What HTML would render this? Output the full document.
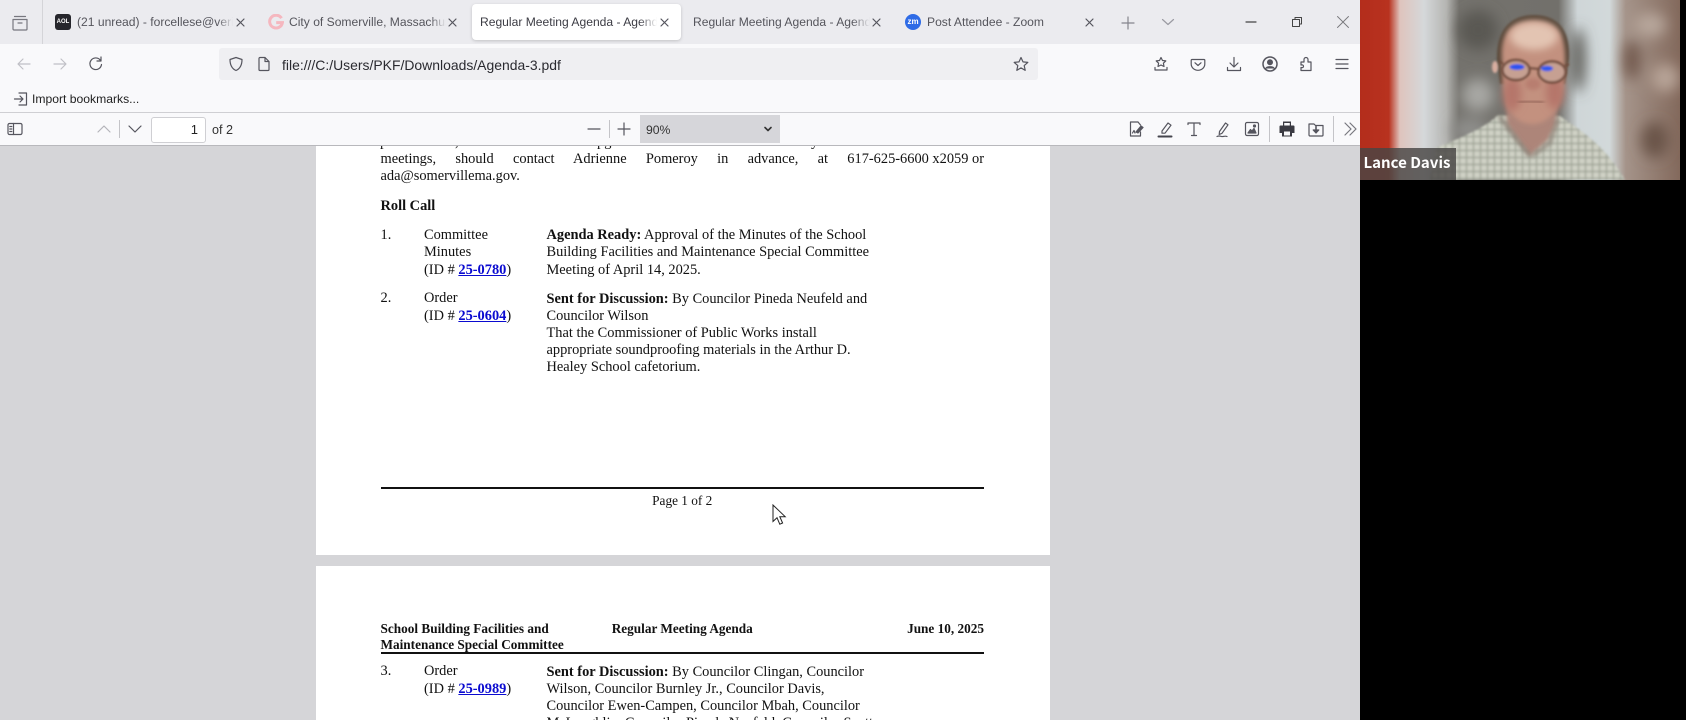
<!DOCTYPE html>
<html><head><meta charset="utf-8"><title>Agenda</title>
<style>
html,body{margin:0;padding:0;background:#000;overflow:hidden}
#r{position:relative;width:1686px;height:720px;overflow:hidden;background:#000;font-family:"Liberation Sans",sans-serif;filter:blur(.3px)}
.a{position:absolute}
.t{position:absolute;white-space:nowrap;line-height:20px;height:20px;color:#3c3c44}
.ui{font-size:12.1px}
.p{position:absolute;white-space:nowrap;font-family:"Liberation Serif",serif;font-size:14.4px;line-height:18px;height:18px;color:#111}
.h{font-size:13.25px}
.b{font-weight:bold}
.p a{color:#0a0ad0;font-weight:bold;text-decoration:underline}
svg.i{position:absolute;width:16px;height:16px;fill:none;stroke:#55555e;stroke-width:1.2;stroke-linecap:round;stroke-linejoin:round}
.fade{overflow:hidden;-webkit-mask-image:linear-gradient(90deg,#000 90%,transparent)}
</style></head><body><div id="r">

<!-- browser chrome -->
<div class="a" style="left:0;top:0;width:1360px;height:720px;background:#d5d5d8"></div>
<div class="a" style="left:0;top:0;width:1360px;height:44px;background:#ebebef"></div>
<div class="a" style="left:0;top:44px;width:1360px;height:68px;background:#f9f9fb"></div>
<div class="a" style="left:0;top:112px;width:1360px;height:1px;background:#cfcfd3"></div>
<div class="a" style="left:0;top:113px;width:1360px;height:32px;background:#f9f9fb"></div>
<div class="a" style="left:0;top:145px;width:1360px;height:1px;background:#b8b8bc"></div>

<div class="a" style="left:42px;top:0;width:1px;height:44px;background:#d4d4d8"></div>
<svg class="i" style="left:11px;top:14px;width:18px;height:18px" viewBox="0 0 18 18"><path d="M3.5 2.5h11M2 5.5h14v9.5a1 1 0 0 1-1 1H3a1 1 0 0 1-1-1zM7 9h4" stroke="#77777f"/></svg>

<!-- tabs -->
<div class="a" style="left:472px;top:4px;width:209px;height:36px;background:#fff;border-radius:4px;box-shadow:0 1px 3px rgba(0,0,0,.18)"></div>

<div class="a" style="left:55px;top:14px;width:16px;height:16px;background:#26262c;border-radius:3px;color:#fff;font:bold 6px/16px 'Liberation Sans',sans-serif;text-align:center">AOL</div>
<div class="t ui fade" style="left:77px;top:12px;width:156px;color:#55555c">(21 unread) - forcellese@verizon.net</div>
<svg class="i" style="left:233px;top:15px" viewBox="0 0 16 16"><path d="M4 4l7 7M11 4l-7 7"/></svg>

<svg class="a" style="left:268px;top:14px" width="16" height="16" viewBox="0 0 16 16"><path d="M13.5 4.2A6.4 6.4 0 1 0 14.4 8.600H8.200" fill="none" stroke="#f5b7bf" stroke-width="3"/></svg>
<div class="t ui fade" style="left:289px;top:12px;width:157px;color:#55555c">City of Somerville, Massachusetts</div>
<svg class="i" style="left:445px;top:15px" viewBox="0 0 16 16"><path d="M4 4l7 7M11 4l-7 7"/></svg>

<div class="t ui fade" style="left:480px;top:12px;width:177px;color:#3c3c44">Regular Meeting Agenda - Agenda</div>
<svg class="i" style="left:657px;top:15px" viewBox="0 0 16 16"><path d="M4 4l7 7M11 4l-7 7"/></svg>

<div class="t ui fade" style="left:693px;top:12px;width:177px;color:#55555c">Regular Meeting Agenda - Agenda</div>
<svg class="i" style="left:869px;top:15px" viewBox="0 0 16 16"><path d="M4 4l7 7M11 4l-7 7"/></svg>

<div class="a" style="left:905px;top:14px;width:16px;height:16px;background:#2e6be6;border-radius:50%;color:#fff;font:bold 8px/15px 'Liberation Sans',sans-serif;text-align:center">zm</div>
<div class="t ui" style="left:927px;top:12px;color:#55555c">Post Attendee - Zoom</div>
<svg class="i" style="left:1082px;top:15px" viewBox="0 0 16 16"><path d="M4 4l7 7M11 4l-7 7"/></svg>
<svg class="i" style="left:1120px;top:15px" viewBox="0 0 16 16"><path d="M8 2v12M2 8h12" stroke="#85858d"/></svg>
<svg class="i" style="left:1160px;top:14px" viewBox="0 0 16 16"><path d="M2.500 5.500L8 10.500l5.500-5" stroke="#9a9aa2"/></svg>
<svg class="i" style="left:1243px;top:14px" viewBox="0 0 16 16"><path d="M3 8h10" stroke="#444"/></svg>
<svg class="i" style="left:1289px;top:14px" viewBox="0 0 16 16"><path d="M3.500 5.500h7v7h-7zM6 5.500V3.500h6.500v6.500h-2" stroke="#444" stroke-width="1"/></svg>
<svg class="i" style="left:1335px;top:14px" viewBox="0 0 16 16"><path d="M2.500 2.500l11 11M13.500 2.500l-11 11" stroke="#77777c" stroke-width=".9"/></svg>

<!-- nav bar -->
<svg class="i" style="left:16px;top:56px" viewBox="0 0 16 16"><path d="M14 8H2.500M7 3L2 8l5 5" stroke="#c0c0c6"/></svg>
<svg class="i" style="left:52px;top:56px" viewBox="0 0 16 16"><path d="M2 8h11.500M9 3l5 5-5 5" stroke="#c0c0c6"/></svg>
<svg class="i" style="left:88px;top:56px" viewBox="0 0 16 16"><path d="M13.500 8.500A5.800 5.800 0 1 1 12 3.800M13 1v4h-4"/></svg>
<div class="a" style="left:219px;top:48px;width:819px;height:32px;background:#efeff2;border-radius:3px"></div>
<svg class="i" style="left:228px;top:56px" viewBox="0 0 16 16"><path d="M8 1.500L14 3.500c0 5-1.500 9-6 11-4.500-2-6-6-6-11z"/></svg>
<svg class="i" style="left:256px;top:56px" viewBox="0 0 16 16"><path d="M3 2.500a1 1 0 0 1 1-1h5l4 4v8a1 1 0 0 1-1 1H4a1 1 0 0 1-1-1zM9 1.500v4h4"/></svg>
<div class="t" id="url" style="left:282px;top:55px;font-size:13.95px;color:#2a2a30">file:///C:/Users/PKF/Downloads/Agenda-3.pdf</div>
<svg class="i" style="left:1013px;top:56px" viewBox="0 0 16 16"><path d="M8 1.500l2 4.400 4.800.5-3.600 3.200 1 4.700L8 11.900l-4.200 2.400 1-4.700L1.200 6.400 6 5.900z"/></svg>

<svg class="i" style="left:1153px;top:56px" viewBox="0 0 16 16"><path d="M8 1.500l1.500 3 3.300.4-2.400 2.300.6 3.300L8 9l-3 1.500.6-3.300-2.400-2.300 3.300-.4zM2 11.500v2.500h12v-2.500"/></svg>
<svg class="i" style="left:1190px;top:56px" viewBox="0 0 16 16"><path d="M2 3.500h12a.800.800 0 0 1 .800.800V8a6.800 6.300 0 0 1-13.600 0V4.300a.800.800 0 0 1 .800-.800zM5 6.800l3 2.700 3-2.700"/></svg>
<svg class="i" style="left:1226px;top:56px" viewBox="0 0 16 16"><path d="M8 1.500v9M4 7l4 4 4-4M1.500 11.500v3h13v-3"/></svg>
<svg class="i" style="left:1262px;top:56px" viewBox="0 0 16 16"><circle cx="8" cy="8" r="7" stroke-width="1.500"/><circle cx="8" cy="6.300" r="2.400" fill="#55555e"/><path d="M3.800 12.500c1-2.300 7.400-2.300 8.400 0" fill="#55555e"/></svg>
<svg class="i" style="left:1298px;top:56px" viewBox="0 0 16 16"><path d="M3 6h3V3.500a2 2 0 0 1 4 0V6h3v8.500H3v-3c2 .5 2.500-.5 2.500-1.200S5 8.500 3 9z"/></svg>
<svg class="i" style="left:1334px;top:56px" viewBox="0 0 16 16"><path d="M2 3.500h12M2 8h12M2 12.500h12"/></svg>

<!-- bookmarks -->
<svg class="i" style="left:13px;top:91px" viewBox="0 0 16 16"><path d="M6 2h7.500v12H6M1.500 8h8M7 5l3 3-3 3"/></svg>
<div class="t" id="bm" style="left:32px;top:89px;font-size:12.15px;color:#222">Import bookmarks...</div>

<!-- pdf toolbar -->
<svg class="i" style="left:7px;top:121px" viewBox="0 0 16 16"><rect x="1" y="2.500" width="14" height="11" rx="1.500"/><path d="M6.500 2.500v11M2.800 5.500h2M2.800 8h2M2.800 10.500h2"/></svg>
<svg class="i" style="left:96px;top:121px" viewBox="0 0 16 16"><path d="M2 11l6-6 6 6" stroke="#b4b4ba"/></svg>
<div class="a" style="left:119px;top:120px;width:1px;height:18px;background:#c4c4c8"></div>
<svg class="i" style="left:127px;top:121px" viewBox="0 0 16 16"><path d="M2 5l6 6 6-6"/></svg>
<div class="a" style="left:151px;top:117px;width:53px;height:24px;background:#fff;border:1px solid #cfcfd3;border-radius:3px"></div>
<div class="t" style="left:152px;top:120px;width:46px;text-align:right;font-size:13px;color:#222">1</div>
<div class="t" style="left:212px;top:120px;font-size:12.600px;color:#333">of 2</div>
<svg class="i" style="left:586px;top:121px" viewBox="0 0 16 16"><path d="M2 8h12"/></svg>
<div class="a" style="left:609px;top:120px;width:1px;height:18px;background:#c4c4c8"></div>
<svg class="i" style="left:616px;top:121px" viewBox="0 0 16 16"><path d="M8 2v12M2 8h12"/></svg>
<div class="a" style="left:640px;top:115px;width:140px;height:28px;background:#d6d6da"></div>
<div class="t" style="left:646px;top:120px;font-size:12.200px;color:#333">90%</div>
<svg class="i" style="left:760px;top:121px" viewBox="0 0 16 16"><path d="M5 6.500l3 3 3-3" stroke="#333" stroke-width="1.600"/></svg>

<svg class="i" style="left:1127px;top:120px;width:18px;height:18px" viewBox="0 0 18 18"><path d="M11 2H3.500v14h10v-4M11 2l2.500 3"/><path d="M9 12l5-6 2 1.500-5 5.500z" fill="#55555e"/><path d="M5.500 13l1.500-2.500 1 2.500" /></svg>
<svg class="i" style="left:1156px;top:120px;width:18px;height:18px" viewBox="0 0 18 18"><path d="M6 11l6-8 3 2.200-6 8H6z"/><path d="M2.500 16.500h13" stroke-width="2" stroke="#44444c"/></svg>
<svg class="i" style="left:1185px;top:120px;width:18px;height:18px" viewBox="0 0 18 18"><path d="M3 4.500V3h12v1.500M9 3v12.500M6.500 15.500h5"/></svg>
<svg class="i" style="left:1214px;top:120px;width:18px;height:18px" viewBox="0 0 18 18"><path d="M5.500 11.500l6-8.500 2.500 1.800-6 8.500-2.800 1.200zM3 16.500c3-1.500 4 .5 6 0s3-.5 4 0"/></svg>
<svg class="i" style="left:1243px;top:120px;width:18px;height:18px" viewBox="0 0 18 18"><rect x="2.500" y="2.500" width="13" height="13" rx="1.500"/><path d="M5 13l2.500-3.500 1.500 1.500 2-2.500 2 4.500z" fill="#55555e"/><circle cx="11.500" cy="6" r="1" fill="#55555e"/></svg>
<div class="a" style="left:1269px;top:116px;width:1px;height:26px;background:#c4c4c8"></div>
<svg class="a" style="left:1278px;top:120px" width="18" height="18" viewBox="0 0 18 18"><path d="M5 1.500h8v4h2.500a1 1 0 0 1 1 1V13H14v3.500H4V13H1.500V6.500a1 1 0 0 1 1-1H5z" fill="#3a3a42"/><rect x="6" y="11.500" width="6" height="4" fill="#f9f9fb"/><rect x="6.200" y="3" width="5.600" height="2.500" fill="#f9f9fb"/></svg>
<svg class="i" style="left:1307px;top:120px;width:18px;height:18px" viewBox="0 0 18 18"><path d="M2 4h5l1.500 1.500H16V15a1 1 0 0 1-1 1H3a1 1 0 0 1-1-1z"/><path d="M9 6.500v6" stroke-width="1.600"/><path d="M6.200 10L9 13l2.800-3z" fill="#55555e"/></svg>
<div class="a" style="left:1333px;top:116px;width:1px;height:26px;background:#c4c4c8"></div>
<svg class="i" style="left:1342px;top:121px" viewBox="0 0 16 16"><path d="M3 2l6 6-6 6M8 2l6 6-6 6" stroke="#77777f"/></svg>

<!-- pdf area -->
<div class="a" style="left:0;top:146px;width:1360px;height:574px;overflow:hidden;background:#d5d5d8">
  <div style="position:absolute;left:0;top:-146px;width:1360px;height:720px;overflow:hidden">
    <div class="a" style="left:316px;top:100px;width:734px;height:455px;background:#fff"></div>
    <div class="a" style="left:316px;top:566px;width:734px;height:154px;background:#fff"></div>

    <div class="p" style="left:380px;top:133px">p</div>
    <div class="p" style="left:455px;top:133px">,</div>
    <div class="p" style="left:597px;top:133px">pg</div>
    <div class="p" style="left:811px;top:133px">y</div>

    <div class="p" style="left:380.500px;top:150px;width:603.500px;text-align:justify;text-align-last:justify;white-space:normal">meetings, should contact Adrienne Pomeroy in advance, at <span style="display:inline-block;white-space:nowrap">617-625-6600 x2059 or</span></div>
    <div class="p" style="left:380.500px;top:167px">ada@somervillema.gov.</div>
    <div class="p b" style="left:380.500px;top:197px">Roll Call</div>

    <div class="p" style="left:380.500px;top:226px">1.</div>
    <div class="p" style="left:424px;top:226px">Committee</div>
    <div class="p" style="left:424px;top:243px">Minutes</div>
    <div class="p" style="left:424px;top:260.500px">(ID # <a>25-0780</a>)</div>
    <div class="p" style="left:546.500px;top:226px"><span class="b">Agenda Ready:</span> Approval of the Minutes of the School</div>
    <div class="p" style="left:546.500px;top:243px">Building Facilities and Maintenance Special Committee</div>
    <div class="p" style="left:546.500px;top:260.500px">Meeting of April 14, 2025.</div>

    <div class="p" style="left:380.500px;top:289px">2.</div>
    <div class="p" style="left:424px;top:289px">Order</div>
    <div class="p" style="left:424px;top:307px">(ID # <a>25-0604</a>)</div>
    <div class="p" style="left:546.500px;top:290px"><span class="b">Sent for Discussion:</span> By Councilor Pineda Neufeld and</div>
    <div class="p" style="left:546.500px;top:307px">Councilor Wilson</div>
    <div class="p" style="left:546.500px;top:323.500px">That the Commissioner of Public Works install</div>
    <div class="p" style="left:546.500px;top:340.500px">appropriate soundproofing materials in the Arthur D.</div>
    <div class="p" style="left:546.500px;top:357.500px">Healey School cafetorium.</div>

    <div class="a" style="left:380.500px;top:486.500px;width:603.500px;height:2px;background:#111"></div>
    <div class="p" style="left:380.500px;top:491.500px;width:603.500px;text-align:center;font-size:13.300px">Page 1 of 2</div>

    <div class="p b h" style="left:380.500px;top:620px">School Building Facilities and</div>
    <div class="p b h" style="left:380.500px;top:636px">Maintenance Special Committee</div>
    <div class="p b h" style="left:380.500px;top:620px;width:603.500px;text-align:center">Regular Meeting Agenda</div>
    <div class="p b h" style="left:380.500px;top:620px;width:603.500px;text-align:right">June 10, 2025</div>
    <div class="a" style="left:380.500px;top:652px;width:603.500px;height:2px;background:#111"></div>

    <div class="p" style="left:380.500px;top:662px">3.</div>
    <div class="p" style="left:424px;top:662px">Order</div>
    <div class="p" style="left:424px;top:679.500px">(ID # <a>25-0989</a>)</div>
    <div class="p" style="left:546.500px;top:663px"><span class="b">Sent for Discussion:</span> By Councilor Clingan, Councilor</div>
    <div class="p" style="left:546.500px;top:680px">Wilson, Councilor Burnley Jr., Councilor Davis,</div>
    <div class="p" style="left:546.500px;top:697px">Councilor Ewen-Campen, Councilor Mbah, Councilor</div>
    <div class="p" style="left:546.500px;top:714px;height:6px;overflow:hidden">McLaughlin, Councilor Pineda Neufeld, Councilor Scott,</div>

    <svg class="a" style="left:772px;top:504px" width="16" height="24" viewBox="0 0 16 24"><path d="M1 1v16.500l4-3.800 2.800 6.500 2.800-1.200-2.800-6.300h5.400z" fill="#fff" stroke="#222" stroke-width="1"/></svg>
  </div>
</div>

<!-- video -->
<svg class="a" style="left:1360px;top:0" width="320" height="180" viewBox="1360 0 320 180">
  <defs>
    <filter id="b8" x="-40%" y="-40%" width="180%" height="180%"><feGaussianBlur stdDeviation="7"/></filter>
    <filter id="b4" x="-40%" y="-40%" width="180%" height="180%"><feGaussianBlur stdDeviation="4"/></filter>
    <filter id="b2" x="-30%" y="-30%" width="160%" height="160%"><feGaussianBlur stdDeviation="2"/></filter>
    <filter id="b1" x="-30%" y="-30%" width="160%" height="160%"><feGaussianBlur stdDeviation="1"/></filter>
    <pattern id="chk" width="7" height="7" patternUnits="userSpaceOnUse">
      <rect width="7" height="7" fill="#cfd1c5"/><path d="M0 3.500h7M3.500 0v7" stroke="#989d91" stroke-width="1.200"/>
    </pattern>
    <linearGradient id="bg" x1="0" x2="1" y1="0" y2="0">
      <stop offset="0" stop-color="#b32d1c"/><stop offset=".09" stop-color="#b8321f"/>
      <stop offset=".125" stop-color="#dfc4bd"/><stop offset=".2" stop-color="#d5d8da"/>
      <stop offset=".27" stop-color="#b5b5b2"/><stop offset=".31" stop-color="#74726d"/>
      <stop offset=".62" stop-color="#72706b"/><stop offset=".68" stop-color="#cfd6d8"/>
      <stop offset=".78" stop-color="#d2d9da"/><stop offset=".83" stop-color="#a5948a"/>
      <stop offset="1" stop-color="#83695c"/>
    </linearGradient>
  </defs>
  <rect x="1360" y="0" width="320" height="180" fill="url(#bg)"/>
  <g filter="url(#b8)">
    <ellipse cx="1478" cy="30" rx="20" ry="20" fill="#5a5853"/>
    <ellipse cx="1478" cy="95" rx="16" ry="16" fill="#a8a8a4"/>
    <ellipse cx="1470" cy="130" rx="18" ry="12" fill="#8f8f8c"/>
    <ellipse cx="1578" cy="60" rx="7" ry="32" fill="#55534e"/>
    <ellipse cx="1650" cy="25" rx="16" ry="12" fill="#b8a79c"/>
    <ellipse cx="1665" cy="78" rx="14" ry="14" fill="#b8a498"/>
    <ellipse cx="1632" cy="60" rx="8" ry="20" fill="#6e5548"/>
    <ellipse cx="1655" cy="140" rx="14" ry="18" fill="#6a5448"/>
  </g>
  <!-- shirt -->
  <path d="M1436 148C1460 138 1485 128 1498 115L1560 116C1580 130 1605 145 1625 180H1430z" fill="url(#chk)" filter="url(#b1)"/>
  <!-- neck -->
  <path d="M1506 100L1558 100 1556 125 1548 140 1530 156 1518 140 1507 125z" fill="#ad8579" filter="url(#b2)"/>
  <path d="M1499 116L1518 141 1530 156" stroke="#7f766c" stroke-width="3" fill="none" filter="url(#b2)"/>
  <path d="M1558 118L1550 143 1532 156" stroke="#8c8378" stroke-width="3" fill="none" filter="url(#b2)"/>
  <!-- head -->
  <path d="M1497 60C1496 26 1514 15 1534 15S1571 26 1569 60L1565 84 1500 84z" fill="#5a483b" filter="url(#b1)"/>
  <path d="M1502 60C1500 30 1514 21 1534 21S1566 30 1565 62C1566 95 1556 124 1532 124S1502 95 1502 60z" fill="#c3917f" filter="url(#b2)"/>
  <ellipse cx="1534" cy="36" rx="24" ry="14" fill="#e3c4b2" filter="url(#b4)"/>
  <ellipse cx="1512" cy="94" rx="9" ry="17" fill="#b5766b" filter="url(#b4)"/>
  <ellipse cx="1555" cy="92" rx="9" ry="17" fill="#b5766b" filter="url(#b4)"/>
  <ellipse cx="1495" cy="67" rx="3" ry="6" fill="#d9aea0" filter="url(#b1)"/>
  <!-- glasses -->
  <g filter="url(#b1)">
    <ellipse cx="1516" cy="70" rx="13.500" ry="10" fill="#c6a092" stroke="#6e4a3a" stroke-width="2.400"/>
    <ellipse cx="1552" cy="72" rx="13.500" ry="10.500" fill="#c6a092" stroke="#6e4a3a" stroke-width="2.400"/>
    <path d="M1529 68l10 1M1499 61l4 3M1565 66l4-2" stroke="#6e4a3a" stroke-width="2"/>
    <ellipse cx="1517" cy="67" rx="7.500" ry="3" fill="#2b52f0"/>
    <ellipse cx="1547" cy="68.500" rx="6" ry="2.800" fill="#2f58f0"/>
  </g>
  <ellipse cx="1533" cy="84" rx="8" ry="6" fill="#b87e70" filter="url(#b2)"/>
  <path d="M1518 102q14-2 26 .5" stroke="#85574c" stroke-width="2.500" fill="none" filter="url(#b2)"/>
</svg>
<div class="a" style="left:1360px;top:148px;width:96px;height:32px;background:rgba(72,70,68,.82)"></div>
<div class="a" id="nm" style="left:1363.500px;top:153px;white-space:nowrap;font:bold 15px/20px 'Noto Sans CJK JP','Liberation Sans',sans-serif;color:#fff">Lance Davis</div>

</div></body></html>
